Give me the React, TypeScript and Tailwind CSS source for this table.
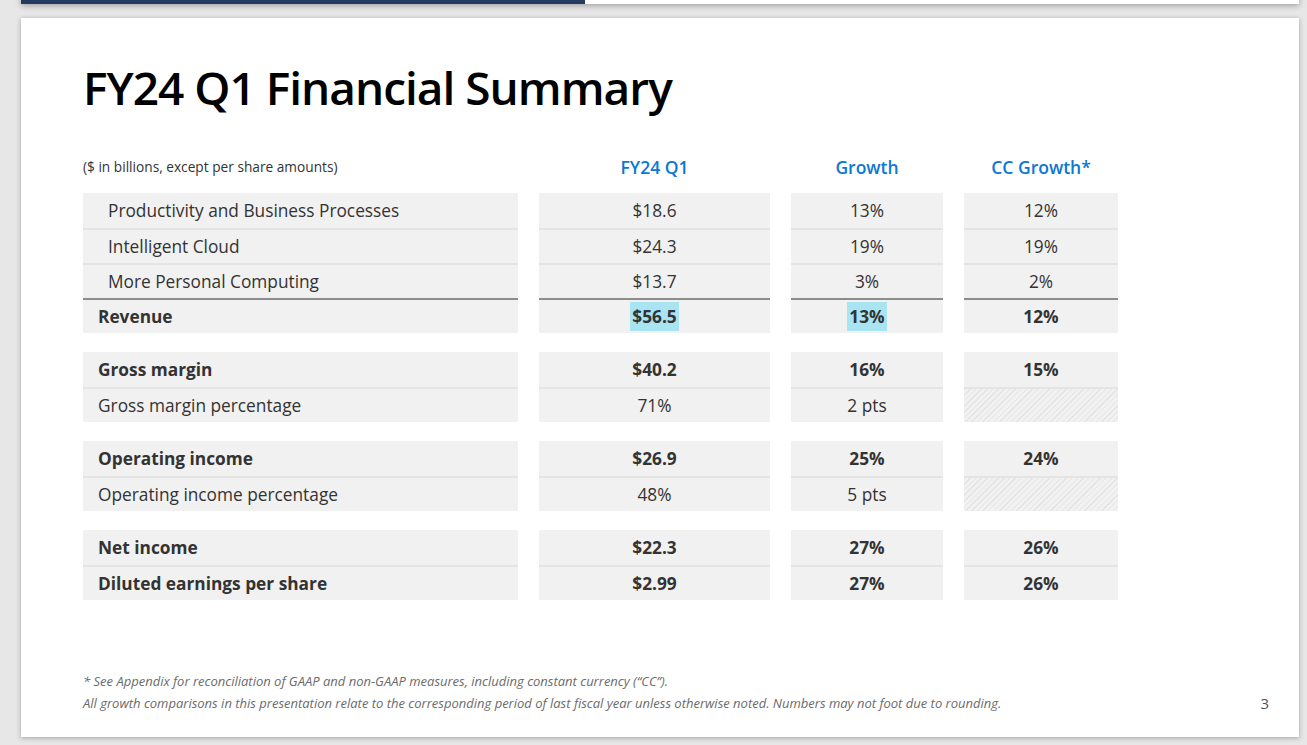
import React from 'react'

type Row = {
  label: string
  value: string
  growth: string
  cc: string | null
  bold?: boolean
  indent?: boolean
  total?: boolean
  highlight?: boolean
}

const groups: Row[][] = [
  [
    { label: 'Productivity and Business Processes', value: '$18.6', growth: '13%', cc: '12%', indent: true },
    { label: 'Intelligent Cloud', value: '$24.3', growth: '19%', cc: '19%', indent: true },
    { label: 'More Personal Computing', value: '$13.7', growth: '3%', cc: '2%', indent: true },
    { label: 'Revenue', value: '$56.5', growth: '13%', cc: '12%', bold: true, total: true, highlight: true },
  ],
  [
    { label: 'Gross margin', value: '$40.2', growth: '16%', cc: '15%', bold: true },
    { label: 'Gross margin percentage', value: '71%', growth: '2 pts', cc: null },
  ],
  [
    { label: 'Operating income', value: '$26.9', growth: '25%', cc: '24%', bold: true },
    { label: 'Operating income percentage', value: '48%', growth: '5 pts', cc: null },
  ],
  [
    { label: 'Net income', value: '$22.3', growth: '27%', cc: '26%', bold: true },
    { label: 'Diluted earnings per share', value: '$2.99', growth: '27%', cc: '26%', bold: true },
  ],
]

function Cell({
  children,
  index,
  total,
  align = 'center',
  hatched = false,
}: {
  children?: React.ReactNode
  index: number
  total?: boolean
  align?: 'left' | 'center'
  hatched?: boolean
}) {
  const border = total
    ? 'border-t-2 border-[#8c8c8c]'
    : index > 0
      ? 'border-t-2 border-[#e4e4e4]'
      : ''
  return (
    <div
      className={`h-[35px] box-border flex items-center ${border} ${
        align === 'center' ? 'justify-center' : ''
      } ${
        hatched
          ? 'bg-[image:repeating-linear-gradient(135deg,#e4e4e4_0px,#e4e4e4_1px,#f1f1f1_1px,#f1f1f1_4px)]'
          : 'bg-[#f1f1f1]'
      }`}
    >
      {children}
    </div>
  )
}

function Highlight({ on, children }: { on?: boolean; children: React.ReactNode }) {
  if (!on) return <>{children}</>
  return <span className="bg-[#a9e4f2] px-[2px] py-[3px]">{children}</span>
}

export default function App() {
  return (
    <div
      className="relative w-[1307px] h-[745px] bg-[#e7e7e7] overflow-hidden"
      style={{ fontFamily: '"Open Sans", "Noto Sans", sans-serif' }}
    >
      {/* previous slide edge */}
      <div className="absolute left-[21px] top-[-20px] w-[1278px] h-[24px] flex shadow-[0_2px_6px_rgba(0,0,0,0.3)]">
        <div className="w-[564px] bg-[#243a62]" />
        <div className="flex-1 bg-white" />
      </div>

      {/* slide */}
      <div className="absolute left-[21px] top-[18px] w-[1278px] h-[719px] bg-white shadow-[0_1px_5px_rgba(0,0,0,0.3)] flex flex-col px-[62px]">
        <h1 className="mt-[46px] h-[46px] text-[46px] leading-none font-semibold text-black tracking-[-1px]">
          FY24 Q1 Financial Summary
        </h1>

        <div className="mt-[39px] h-[36px] grid grid-cols-[435px_231px_152px_154px] gap-x-[21px] items-center">
          <div className="text-[13.7px] text-[#333]">($ in billions, except per share amounts)</div>
          <div className="text-center text-[17.5px] font-semibold text-[#0a78d4]">FY24 Q1</div>
          <div className="text-center text-[17.5px] font-semibold text-[#0a78d4]">Growth</div>
          <div className="text-center text-[17.5px] font-semibold text-[#0a78d4]">CC Growth*</div>
        </div>

        <div className="mt-[8px] flex flex-col gap-[19px]">
          {groups.map((rows, gi) => (
            <div key={gi} className="grid grid-cols-[435px_231px_152px_154px] gap-x-[21px]">
              {rows.map((r, i) => (
                <React.Fragment key={r.label}>
                  <Cell index={i} total={r.total} align="left">
                    <span
                      className={`text-[17.3px] text-[#333] ${r.indent ? 'pl-[25px]' : 'pl-[15px]'} ${
                        r.bold ? 'font-bold' : ''
                      }`}
                    >
                      {r.label}
                    </span>
                  </Cell>
                  <Cell index={i} total={r.total}>
                    <span className={`text-[17.3px] text-[#333] ${r.bold ? 'font-bold' : ''}`}>
                      <Highlight on={r.highlight}>{r.value}</Highlight>
                    </span>
                  </Cell>
                  <Cell index={i} total={r.total}>
                    <span className={`text-[17.3px] text-[#333] ${r.bold ? 'font-bold' : ''}`}>
                      <Highlight on={r.highlight}>{r.growth}</Highlight>
                    </span>
                  </Cell>
                  <Cell index={i} total={r.total} hatched={r.cc === null}>
                    {r.cc && (
                      <span className={`text-[17.3px] text-[#333] ${r.bold ? 'font-bold' : ''}`}>{r.cc}</span>
                    )}
                  </Cell>
                </React.Fragment>
              ))}
            </div>
          ))}
        </div>

        <div className="mt-auto mb-[23px] flex items-end">
          <div className="flex-1 text-[13px] italic text-[#6b6b6b] leading-[22px]">
            <div>* See Appendix for reconciliation of GAAP and non-GAAP measures, including constant currency (“CC”).</div>
            <div>
              All growth comparisons in this presentation relate to the corresponding period of last fiscal year unless
              otherwise noted. Numbers may not foot due to rounding.
            </div>
          </div>
          <div className="text-[15px] text-[#555] leading-[22px] mr-[-32px]">3</div>
        </div>
      </div>
    </div>
  )
}
